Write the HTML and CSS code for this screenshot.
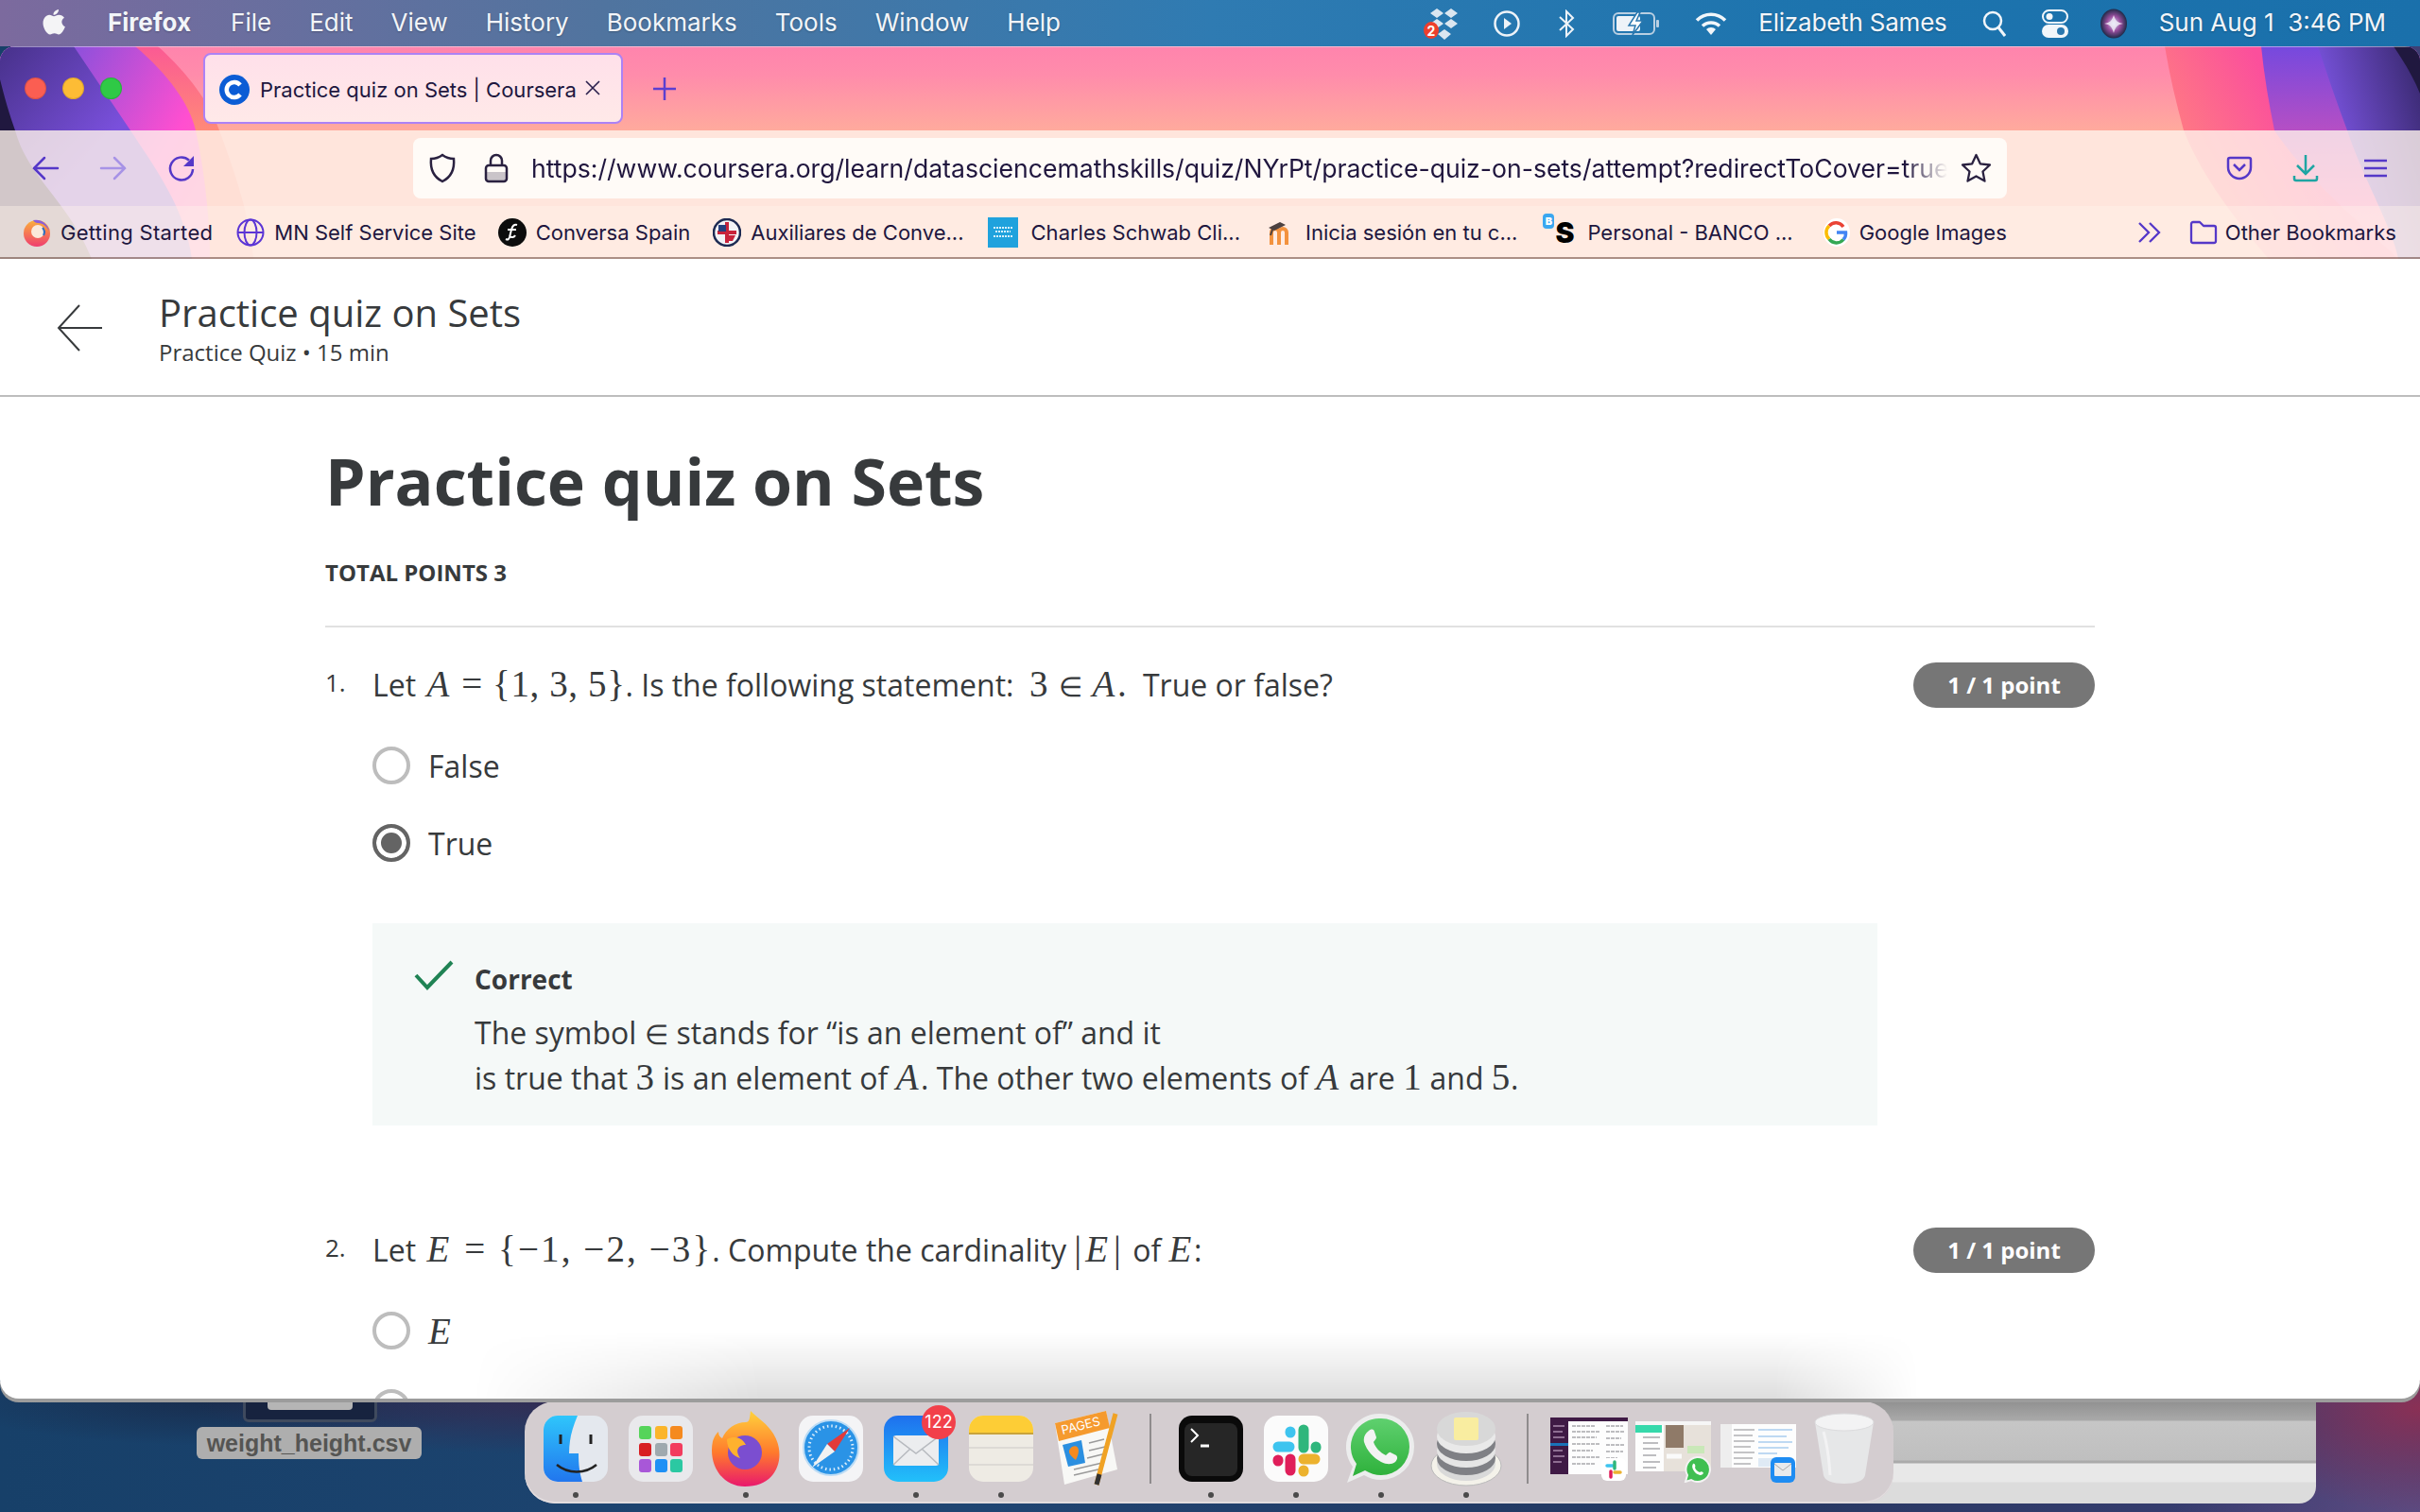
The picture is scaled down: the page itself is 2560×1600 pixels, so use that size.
FILE: index.html
```html
<!DOCTYPE html>
<html lang="en">
<head>
    <meta charset="UTF-8">
    <title>Practice quiz on Sets | Coursera</title>
    <link rel="stylesheet" href="styles.css">
</head>
<body>

<div class="desktop">
    <!-- things lying on the wallpaper, behind the browser -->
    <div class="back-window"></div>
    <div class="file-thumb"><span></span></div>
    <div class="file-label">weight_height.csv</div>

    <header class="menubar">
        <svg class="apple" width="24" height="32" viewBox="0 0 24 32"><path fill="#f4f4f6" d="M17 1c.3 3-2.600 6-5.500 5.800C11.200 4 14 1.300 17 1zM12 8.200c1.400 0 3-1.500 5.500-1.500 2 0 4.200 1 5.500 3-3.900 2.300-3.300 7.800.9 9.500-1.200 3.400-4 8.300-6.800 8.300-1.700 0-2.400-1.200-4.500-1.200s-3 1.200-4.600 1.200C4.500 27.500.5 20.500.5 15.500c0-5.200 3.300-8.700 6.700-8.700 2 0 3.600 1.400 4.800 1.400z"/></svg>
        <nav class="menu-left">
            <span class="menu-app">Firefox</span>
            <span>File</span>
            <span>Edit</span>
            <span>View</span>
            <span>History</span>
            <span>Bookmarks</span>
            <span>Tools</span>
            <span>Window</span>
            <span>Help</span>
        </nav>
        <div class="menu-right">
            <svg class="tray-dropbox" width="40" height="34" viewBox="0 0 40 34"><g fill="#dbe6f0"><path d="M15 1l7 5-7 5-7-5zM30 1l7 5-7 5-7-5zM15 12l7 5-7 5-7-5zM30 12l7 5-7 5-7-5zM23 23l7 5-7 6-7-6z"/></g><ellipse cx="9" cy="24" rx="8" ry="9" fill="#ee3f2c"/><text x="9" y="29.500" class="tray-badge">2</text></svg>
            <svg class="tray-play" width="28" height="30" viewBox="0 0 28 30"><circle cx="14" cy="15" r="12.500" fill="none" stroke="#eef3f8" stroke-width="2.500"/><path d="M11 9l8 6-8 6z" fill="#eef3f8"/></svg>
            <svg class="tray-bt" width="20" height="30" viewBox="0 0 20 30"><path d="M3 8l14 13-7 7V2l7 7L3 22" fill="none" stroke="#eef3f8" stroke-width="2"/></svg>
            <svg class="tray-batt" width="50" height="26" viewBox="0 0 50 26"><rect x="1" y="2" width="43" height="22" rx="5" fill="none" stroke="#b9cfe2" stroke-width="2"/><rect x="4" y="5" width="25" height="16" rx="2" fill="#eef3f8"/><rect x="46" y="9" width="3" height="8" rx="1" fill="#b9cfe2"/><path d="M26 1l-9 14h7l-3 10 11-15h-7l4-9z" fill="#fff" stroke="#2a77ae" stroke-width="1.500"/></svg>
            <svg class="tray-wifi" width="34" height="26" viewBox="0 0 34 26"><g fill="none" stroke="#f2f6fa" stroke-width="3.500"><path d="M2 9.500a21 21 0 0 1 30 0"/><path d="M8 15.500a13 13 0 0 1 18 0"/></g><path d="M17 25l-5-6a7 7 0 0 1 10 0z" fill="#f2f6fa"/></svg>
            <span class="tray-name">Elizabeth Sames</span>
            <svg class="tray-search" width="25" height="28" viewBox="0 0 25 28"><circle cx="11" cy="11" r="9" fill="none" stroke="#f2f6fa" stroke-width="2.500"/><path d="M17 18l7 9" stroke="#f2f6fa" stroke-width="3"/></svg>
            <svg class="tray-control" width="28" height="30" viewBox="0 0 28 30"><rect x="1" y="1" width="26" height="13" rx="6.500" fill="none" stroke="#f2f6fa" stroke-width="2"/><circle cx="8" cy="7.500" r="3.500" fill="#f2f6fa"/><rect x="0" y="16" width="28" height="14" rx="7" fill="#f2f6fa"/><circle cx="20" cy="23" r="4" fill="#2a77ae"/></svg>
            <svg class="tray-siri" width="28" height="32" viewBox="0 0 28 32"><defs><radialGradient id="siri"><stop offset="0" stop-color="#c8e4ee"/><stop offset=".5" stop-color="#9a4f9f"/><stop offset="1" stop-color="#1f2a48"/></radialGradient></defs><ellipse cx="14" cy="16" rx="14" ry="15.500" fill="url(#siri)"/><path d="M4 16c6-1 8-3 10-9 2 6 4 8 10 9-6 1-8 3-10 10-2-7-4-9-10-10z" fill="#f4f0fa" opacity=".8"/></svg>
            <span class="tray-date">Sun Aug 1&nbsp; 3:46 PM</span>
        </div>
    </header>

    <main class="browser">
        <div class="chrome">
            <svg class="chrome-art" width="2560" height="225" viewBox="0 0 2560 225">
                <defs>
                    <linearGradient id="leftBand" x1="0" y1="0" x2="0" y2="1"><stop offset="0" stop-color="#fb5a94"/><stop offset=".4" stop-color="#ff8a78"/></linearGradient>
                    <linearGradient id="leftMagenta" x1="0" y1="0" x2="1" y2=".6"><stop offset=".25" stop-color="#8a50dc"/><stop offset=".8" stop-color="#ff4fd0"/><stop offset="1" stop-color="#ff60c0"/></linearGradient>
                    <linearGradient id="leftPurple" x1="0" y1="0" x2=".5" y2=".5"><stop offset="0" stop-color="#47318a"/><stop offset="1" stop-color="#7a50dc"/></linearGradient>
                    <linearGradient id="rightBand" x1="0" y1=".45" x2="1" y2="0"><stop offset="0" stop-color="#ff8080"/><stop offset=".45" stop-color="#fb4f9c"/></linearGradient>
                    <linearGradient id="rightPurple" x1="0" y1="0" x2="0" y2="1"><stop offset="0" stop-color="#7549de"/><stop offset=".4" stop-color="#b64fc4"/><stop offset=".8" stop-color="#ff60b0"/></linearGradient>
                    <linearGradient id="rightDark" x1="1" y1="0" x2="0" y2=".6"><stop offset=".1" stop-color="#3e2c78"/><stop offset=".9" stop-color="#8058ea"/></linearGradient>
                </defs>
                <path d="M0 0H167C200 30 222 60 232 89C255 150 265 190 268 225H0z" fill="url(#leftBand)"/>
                <path d="M0 0H143C178 30 200 60 207 89C218 140 222 190 222 225H0z" fill="url(#leftMagenta)"/>
                <path d="M0 0H78L138 89C165 130 195 170 203 225H0z" fill="url(#leftPurple)"/>
                <path d="M0 35C5 55 10 72 16 89C30 140 70 160 97 225H0z" fill="#20183f"/>
                <path d="M2290 0C2295 30 2302 60 2310 89C2330 140 2370 190 2400 225H2560V0z" fill="url(#rightBand)"/>
                <path d="M2392 0C2395 30 2400 60 2406 89C2440 140 2500 190 2537 225H2560V0z" fill="url(#rightPurple)"/>
                <path d="M2452 0C2462 30 2472 60 2483 89C2500 140 2530 190 2537 225H2560V0z" fill="url(#rightDark)"/>
                <path d="M2532 0C2542 15 2552 30 2560 50V0z" fill="#20183f"/>
            </svg>

            <div class="tabstrip">
                <div class="traffic">
                    <i class="dot-red"></i><i class="dot-yellow"></i><i class="dot-green"></i>
                </div>
                <div class="tab">
                    <svg width="32" height="32" viewBox="0 0 32 32"><circle cx="16" cy="16" r="16" fill="#0b5cd5"/><path d="M22 11a8 8 0 1 0 0 10" fill="none" stroke="#fff" stroke-width="4.500"/></svg>
                    <span class="tab-title">Practice quiz on Sets | Coursera</span>
                    <svg class="tab-close" width="18" height="18" viewBox="0 0 18 18"><path d="M2 2l14 14M16 2L2 16" stroke="#2a1f4c" stroke-width="1.600"/></svg>
                </div>
                <svg class="tab-new" width="26" height="26" viewBox="0 0 26 26"><path d="M13 1v24M1 13h24" stroke="#5b3fd0" stroke-width="2.500"/></svg>
            </div>

            <div class="navbar">
                <svg width="30" height="28" viewBox="0 0 30 28" class="nav-back"><path d="M28 14H3M14 3L3 14l11 11" fill="none" stroke="#5538c8" stroke-width="2.500" stroke-linecap="round"/></svg>
                <svg width="30" height="28" viewBox="0 0 30 28" class="nav-fwd"><path d="M2 14h25M16 3l11 11-11 11" fill="none" stroke="#a793e6" stroke-width="2.500" stroke-linecap="round"/></svg>
                <svg width="30" height="30" viewBox="0 0 30 30" class="nav-reload"><path d="M27 16a12 12 0 1 1-4-9.500" fill="none" stroke="#5538c8" stroke-width="2.500"/><path d="M28 2v11H17z" fill="#5538c8"/></svg>
                <div class="urlbar">
                    <svg width="30" height="32" viewBox="0 0 30 32"><path d="M15 2c4 3 8 4 12 4 1 11-2 19-12 24C5 25 2 17 3 6c4 0 8-1 12-4z" fill="none" stroke="#2a2140" stroke-width="2.500"/></svg>
                    <svg class="url-lock" width="26" height="32" viewBox="0 0 26 32"><rect x="2" y="13" width="22" height="17" rx="3" fill="none" stroke="#2a2140" stroke-width="2.500"/><path d="M2 20h22v7a3 3 0 0 1-3 3H5a3 3 0 0 1-3-3z" fill="#2a2140" opacity=".25"/><path d="M7 13V8a6 6 0 0 1 12 0v5" fill="none" stroke="#2a2140" stroke-width="2.500"/></svg>
                    <div class="url-text">https://www.coursera.org/learn/datasciencemathskills/quiz/NYrPt/practice-quiz-on-sets/attempt?redirectToCover=true</div>
                    <svg width="33" height="32" viewBox="0 0 32 32"><path d="M16 2l4.300 9.300 10.200 1.200-7.500 7 2 10.100L16 24.500l-9 5.100 2-10.100-7.500-7 10.200-1.200z" fill="none" stroke="#2a2140" stroke-width="2.300" stroke-linejoin="round"/></svg>
                </div>
                <svg class="nav-pocket" width="28" height="26" viewBox="0 0 28 26"><path d="M2 4a2 2 0 0 1 2-2h20a2 2 0 0 1 2 2v8a12 12 0 0 1-24 0z" fill="none" stroke="#5538c8" stroke-width="2.500"/><path d="M8 9l6 6 6-6" fill="none" stroke="#5538c8" stroke-width="2.500"/></svg>
                <svg class="nav-down" width="28" height="30" viewBox="0 0 28 30"><path d="M14 1v20M5 12l9 9 9-9" fill="none" stroke="#1fa5a3" stroke-width="2.500"/><path d="M2 23v3a2 2 0 0 0 2 2h20a2 2 0 0 0 2-2v-3" fill="none" stroke="#1fa5a3" stroke-width="2.500"/></svg>
                <svg class="nav-menu" width="26" height="20" viewBox="0 0 26 20"><path d="M1 2h24M1 10h24M1 18h24" stroke="#5538c8" stroke-width="2.500"/></svg>
            </div>

            <div class="bookmarks">
                <div class="bm">
                    <svg width="30" height="30" viewBox="0 0 30 30"><defs><linearGradient id="ffMark" x1="0" y1="0" x2="0" y2="1"><stop offset="0" stop-color="#fbb03b"/><stop offset="1" stop-color="#ef3d6f"/></linearGradient></defs><circle cx="15" cy="16" r="14" fill="url(#ffMark)"/><circle cx="16" cy="14" r="7" fill="#fbe9da"/><path d="M11 2a14 14 0 0 1 17 12c-2-5-6-9-12-9-2 0-4-1-5-3z" fill="#8b5ed8"/><path d="M21 10a7 7 0 0 1 1 8" stroke="#2c6fc0" stroke-width="2" fill="none"/></svg>
                    <span class="bm-wide">Getting Started</span>
                </div>
                <div class="bm">
                    <svg width="30" height="30" viewBox="0 0 30 30"><g fill="none" stroke="#5b35d5" stroke-width="2"><circle cx="15" cy="15" r="13.500"/><ellipse cx="15" cy="15" rx="6.500" ry="13.500"/><path d="M2 15h26"/></g></svg>
                    <span>MN Self Service Site</span>
                </div>
                <div class="bm">
                    <svg width="30" height="30" viewBox="0 0 30 30"><circle cx="15" cy="15" r="15" fill="#0c0c0c"/><path d="M20 7c-3-1-5 1-6 5l-2 8c-1 3-2 3-4 2M10 12h9M12 19c2 2 5 1 6-1" fill="none" stroke="#fff" stroke-width="2"/></svg>
                    <span>Conversa Spain</span>
                </div>
                <div class="bm">
                    <svg width="30" height="30" viewBox="0 0 30 30"><circle cx="15" cy="15" r="14" fill="#f3f3f6" stroke="#1d2a52" stroke-width="2.500"/><path d="M15 4v22M5 15h20" stroke="#c8233b" stroke-width="4"/><path d="M6 7h8v7H6z" fill="#25407f"/><path d="M17 18h7l-3 6h-4z" fill="#c8233b"/></svg>
                    <span>Auxiliares de Conve...</span>
                </div>
                <div class="bm bm-schwab">
                    <svg width="32" height="32" viewBox="0 0 32 32"><rect width="32" height="32" fill="#1fa2dd"/><path d="M6 11h20M8 15h16M6 20h20" stroke="#d8f2fb" stroke-width="2" stroke-dasharray="2 1"/></svg>
                    <span>Charles Schwab Cli...</span>
                </div>
                <div class="bm">
                    <svg width="32" height="30" viewBox="0 0 32 30"><path d="M6 28V15a4 4 0 0 1 8 0v13M14 15a4 4 0 0 1 8 0v13" fill="none" stroke="#f3923e" stroke-width="4"/><path d="M3 10l12-6 6 3-12 6z" fill="#4c4140"/><path d="M8 9l-3 9" stroke="#4c4140" stroke-width="2"/></svg>
                    <span>Inicia sesión en tu c...</span>
                </div>
                <div class="bm">
                    <span class="banco-icon"><i>B</i>S</span>
                    <span>Personal - BANCO ...</span>
                </div>
                <div class="bm">
                    <svg width="28" height="30" viewBox="0 0 28 30"><ellipse cx="14" cy="15" rx="14" ry="15" fill="#fff"/><g fill="none" stroke-width="3.500"><path d="M21 9a9.500 9.500 0 0 0-15-1" stroke="#ea4335"/><path d="M6 8a9.500 9.500 0 0 0 0 14" stroke="#fbbc05"/><path d="M6 22a9.500 9.500 0 0 0 15 .5" stroke="#34a853"/><path d="M21 22.500a9.500 9.500 0 0 0 2.500-7.500H14" stroke="#4285f4"/></g></svg>
                    <span>Google Images</span>
                </div>
                <svg class="bm-more" width="26" height="24" viewBox="0 0 26 24"><path d="M2 2l10 10L2 22M13 2l10 10-10 10" fill="none" stroke="#5538c8" stroke-width="2.300"/></svg>
                <div class="bm bm-other">
                    <svg width="30" height="26" viewBox="0 0 30 26"><path d="M2 4a2 2 0 0 1 2-2h7l4 4h11a2 2 0 0 1 2 2v14a2 2 0 0 1-2 2H4a2 2 0 0 1-2-2z" fill="none" stroke="#5538c8" stroke-width="2.300" stroke-linejoin="round"/></svg>
                    <span>Other Bookmarks</span>
                </div>
            </div>
        </div>

        <div class="page">
            <div class="page-head">
                <svg class="head-back" width="50" height="52" viewBox="0 0 50 52"><path d="M48 26H2M24 2L2 26l22 24" fill="none" stroke="#373a3c" stroke-width="2"/></svg>
                <div class="head-text">
                    <div class="head-title">Practice quiz on Sets</div>
                    <div class="head-sub">Practice Quiz • 15 min</div>
                </div>
            </div>

            <div class="quiz">
                <h1>Practice quiz on Sets</h1>
                <div class="total">TOTAL POINTS 3</div>

                <section class="question q-one">
                    <div class="q-row">
                        <span class="q-num">1.</span>
                        <div class="q-text">Let <span class="math"><i>A</i> = {1, 3, 5}</span>. Is the following statement: &nbsp;<span class="math">3 <span class="elem">∈</span> <i>A</i>.</span>&nbsp; True or false?</div>
                        <span class="pill">1 / 1 point</span>
                    </div>
                    <div class="option option-first"><span class="radio"></span>False</div>
                    <div class="option"><span class="radio radio-on"></span>True</div>
                    <div class="feedback">
                        <svg width="42" height="32" viewBox="0 0 42 32"><path d="M2 16l12 13L40 2" fill="none" stroke="#1f8354" stroke-width="4"/></svg>
                        <div>
                            <div class="feedback-title">Correct</div>
                            <div class="feedback-text">The symbol <span class="math elem">∈</span> stands for “is an element of” and it</div>
                            <div class="feedback-text">is true that <span class="math">3</span> is an element of <span class="math"><i>A</i></span>. The other two elements of <span class="math"><i>A</i></span> are <span class="math">1</span> and <span class="math">5</span>.</div>
                        </div>
                    </div>
                </section>

                <section class="question q-two">
                    <div class="q-row">
                        <span class="q-num">2.</span>
                        <div class="q-text">Let <span class="math math-set"><i>E</i> = {−1, −2, −3}</span>. Compute the cardinality <span class="math math-abs">|<i>E</i>|</span> of <span class="math"><i>E</i></span>:</div>
                        <span class="pill">1 / 1 point</span>
                    </div>
                    <div class="option option-first"><span class="radio"></span><span class="math"><i>E</i></span></div>
                    <div class="option"><span class="radio"></span></div>
                </section>
            </div>
            <div class="page-fade"></div>
        </div>
    </main>

    <footer class="dock-row">
        <div class="dock">
            <div class="dock-app run">
                <svg width="68" height="70" viewBox="0 0 68 70"><defs><linearGradient id="fin" x1="0" y1="0" x2="0" y2="1"><stop offset="0" stop-color="#2fc6fb"/><stop offset="1" stop-color="#2176ee"/></linearGradient></defs><rect width="68" height="70" rx="15" fill="#e4e8ee"/><path d="M15 0h21c-6 14-9 26-9 40h10c0 12 1 20 4 30H15A15 15 0 0 1 0 55V15A15 15 0 0 1 15 0z" fill="url(#fin)"/><path d="M18 20v10M50 20v10" stroke="#222" stroke-width="3"/><path d="M14 52c12 10 30 10 42 0" fill="none" stroke="#222" stroke-width="2.500"/></svg>
            </div>
            <div class="dock-app">
                <svg width="68" height="70" viewBox="0 0 68 70"><rect width="68" height="70" rx="15" fill="#e9e9ec"/><g><rect x="11" y="11" width="13" height="14" rx="3" fill="#55d45a"/><rect x="28" y="11" width="13" height="14" rx="3" fill="#fbb52a"/><rect x="44" y="11" width="13" height="14" rx="3" fill="#f58a1f"/><rect x="11" y="29" width="13" height="14" rx="3" fill="#d81e22"/><rect x="28" y="29" width="13" height="14" rx="3" fill="#9fa9ae"/><rect x="44" y="29" width="13" height="14" rx="3" fill="#f23c5e"/><rect x="11" y="46" width="13" height="14" rx="3" fill="#a857d8"/><rect x="28" y="46" width="13" height="14" rx="3" fill="#1e90f5"/><rect x="44" y="46" width="13" height="14" rx="3" fill="#2bc8a2"/></g></svg>
            </div>
            <div class="dock-app run">
                <svg width="76" height="80" viewBox="0 0 76 80"><defs><linearGradient id="fox" x1="0" y1="0" x2="0" y2="1"><stop offset="0" stop-color="#ffd23c"/><stop offset=".55" stop-color="#ff7a2c"/><stop offset="1" stop-color="#e9186d"/></linearGradient></defs><path d="M38 12c4 0 4-4 5-12 8 8 18 14 24 24 14 22 6 56-30 56C12 80-2 56 3 32c2-6 4-8 6-10 0 4 2 6 4 7 4-10 14-17 25-17z" fill="url(#fox)"/><circle cx="37" cy="44" r="18" fill="#7b4ed0"/><path d="M18 30c8-4 16-2 20 6-8 0-12 6-6 14-8-2-14-10-14-20z" fill="#ffb12e"/></svg>
            </div>
            <div class="dock-app">
                <svg width="68" height="70" viewBox="0 0 68 70"><rect width="68" height="70" rx="15" fill="#f4f4f6"/><circle cx="34" cy="34" r="29" fill="#2a93e6" stroke="#bcdcf5" stroke-width="2"/><circle cx="34" cy="34" r="23" fill="none" stroke="#dceefb" stroke-width="3" stroke-dasharray="1.500 3"/><path d="M54 13L30 30l8 8z" fill="#e23a3a"/><path d="M14 55L38 38l-8-8z" fill="#f2f2f2"/></svg>
            </div>
            <div class="dock-app run">
                <svg width="68" height="70" viewBox="0 0 68 70"><defs><linearGradient id="mailBg" x1="0" y1="0" x2="0" y2="1"><stop offset="0" stop-color="#1e70ee"/><stop offset="1" stop-color="#22c0fa"/></linearGradient></defs><rect width="68" height="70" rx="15" fill="url(#mailBg)"/><rect x="10" y="21" width="48" height="32" rx="3" fill="#ecedef"/><path d="M10 22l24 18 24-18M10 52l18-17M58 52L40 35" fill="none" stroke="#b7babf" stroke-width="1.500"/></svg>
                <span class="dock-badge">122</span>
            </div>
            <div class="dock-app run">
                <svg width="68" height="70" viewBox="0 0 68 70"><defs><clipPath id="notesClip"><rect width="68" height="70" rx="15"/></clipPath></defs><g clip-path="url(#notesClip)"><rect width="68" height="70" fill="#eeebe4"/><rect width="68" height="18" fill="#fdcd36"/><rect y="18" width="68" height="2" fill="#c9a33a"/><path d="M0 34h68M0 52h68" stroke="#d8d5cf" stroke-width="1.500"/></g></svg>
            </div>
            <div class="dock-app">
                <svg width="70" height="80" viewBox="0 0 70 80"><path d="M2 13L56 0l12 62-56 16z" fill="#f8f8f6"/><path d="M2 13L56 0l4 18L6 32z" fill="#f59a2e"/><text x="10" y="25" class="pages-word" transform="rotate(-14 10 25)">PAGES</text><path d="M10 36l20-5 4 24-18 4z" fill="#2b8fe0"/><path d="M20 38c6-3 10 2 4 14-8-6-9-10-4-14z" fill="#f58a1f"/><path d="M38 34l16-4M38 42l17-4M36 50l20-5M22 62l30-7M22 68l30-7" stroke="#9a9a9a" stroke-width="1.500"/><path d="M66 3L46 78" stroke="#f0a224" stroke-width="5"/><path d="M49 67l-3 11" stroke="#333" stroke-width="5"/></svg>
            </div>
            <span class="dock-sep sep-one"></span>
            <div class="dock-app run">
                <svg width="68" height="70" viewBox="0 0 68 70"><rect width="68" height="70" rx="14" fill="#0a0a0a"/><rect x="6" y="8" width="56" height="56" rx="8" fill="#262626"/><path d="M13 14l7 7-7 7" fill="none" stroke="#fff" stroke-width="2"/><path d="M23 32h9" stroke="#fff" stroke-width="3"/></svg>
            </div>
            <div class="dock-app run">
                <svg width="68" height="70" viewBox="0 0 68 70"><rect width="68" height="70" rx="15" fill="#fbfbfb"/><g stroke-linecap="round" stroke-width="11" fill="none"><path d="M28 17v1" stroke="#3ec4ef"/><path d="M15 33h12" stroke="#3ec4ef"/><path d="M42 15v19" stroke="#2fb67c"/><path d="M55 33v1" stroke="#2fb67c"/><path d="M15 47v1" stroke="#e01e5a"/><path d="M28 46v12" stroke="#e01e5a"/><path d="M42 46h12" stroke="#ecb22e"/><path d="M42 58v1" stroke="#ecb22e"/></g></svg>
            </div>
            <div class="dock-app run">
                <svg width="74" height="78" viewBox="0 0 74 78"><path d="M37 2a35 35 0 0 1 0 70c-7 0-13-2-18-5L1 75l6-17A35 35 0 0 1 37 2z" fill="#eceded"/><defs><linearGradient id="wa" x1="0" y1="0" x2="0" y2="1"><stop offset="0" stop-color="#5fd06f"/><stop offset="1" stop-color="#2eb13b"/></linearGradient></defs><path d="M37 7a30 30 0 0 1 0 60c-6 0-12-2-17-5L7 68l4-13A30 30 0 0 1 37 7z" fill="url(#wa)"/><path d="M24 20c3-2 5-2 6 1l2 6c0 2-2 3-3 5 2 6 7 11 13 14 2-1 3-4 5-3l6 3c2 2 1 5-1 7-4 3-9 3-15 0-9-5-15-12-18-21-1-5 1-9 5-12z" fill="#f3f3f3"/></svg>
            </div>
            <div class="dock-app run">
                <svg width="76" height="80" viewBox="0 0 76 80"><ellipse cx="38" cy="58" rx="37" ry="21" fill="#f4f2ea" stroke="#bbb"/><g><ellipse cx="38" cy="56" rx="31" ry="18" fill="#d9d9d9"/><ellipse cx="38" cy="50" rx="31" ry="18" fill="#7f8085"/><ellipse cx="38" cy="42" rx="31" ry="18" fill="#e5e5e5"/><ellipse cx="38" cy="35" rx="31" ry="18" fill="#7f8085"/><ellipse cx="38" cy="27" rx="31" ry="18" fill="#e9e9e9"/><ellipse cx="38" cy="19" rx="31" ry="18" fill="#d8d8d8"/></g><rect x="25" y="7" width="26" height="24" rx="2" fill="#f9eda0"/></svg>
            </div>
            <span class="dock-sep sep-two"></span>
            <svg class="thumb" width="82" height="72" viewBox="0 0 82 72">
                <rect y="3" width="82" height="60" fill="#fdfdfd"/>
                <rect y="3" width="82" height="4" fill="#3f1a45"/>
                <rect y="3" width="19" height="60" fill="#3f1a45"/>
                <rect y="30" width="19" height="3" fill="#1a73b8"/>
                <path d="M3 12h12M3 18h10M3 24h12M3 38h10M3 44h12M3 50h9" stroke="#a98bac" stroke-width="1.500"/>
                <path d="M23 12h24M23 18h30M23 24h26M23 31h30M23 38h22M23 45h30M23 52h24M59 12h18M59 18h20M59 25h16M59 32h20M59 39h18M59 46h12" stroke="#bdbdc0" stroke-width="2" stroke-dasharray="4 1"/>
                <rect x="54" y="46" width="26" height="24" rx="6" fill="#fff"/>
                <g stroke-linecap="round" stroke-width="3.500" fill="none"><path d="M60 54h6" stroke="#3ec4ef"/><path d="M68 50v7" stroke="#2fb67c"/><path d="M68 61h6" stroke="#ecb22e"/><path d="M64 60v6" stroke="#e01e5a"/></g>
            </svg>
            <svg class="thumb" width="82" height="72" viewBox="0 0 82 72">
                <rect y="7" width="80" height="53" fill="#e7e1da"/>
                <rect y="7" width="30" height="53" fill="#fdfdfd"/>
                <rect y="7" width="80" height="4" fill="#f6f6f6"/>
                <rect y="11" width="28" height="8" fill="#36d9ab"/>
                <path d="M8 24h18M8 30h16M8 36h18M8 43h14M8 50h18M8 56h14" stroke="#bdbdc0" stroke-width="2"/>
                <rect x="32" y="11" width="19" height="24" fill="#8f7a68"/>
                <rect x="55" y="33" width="18" height="8" fill="#c9e8b8"/>
                <path d="M33 44h16" stroke="#fafafa" stroke-width="5"/>
                <path d="M65 45a13 13 0 1 1-6 24l-6 2 2-7a13 13 0 0 1 10-19z" fill="#3fbf51" stroke="#f3f3f3" stroke-width="2"/>
                <path d="M61 52c2-1 3 3 2 4 1 3 3 4 5 5 2-2 4 0 4 1-2 3-5 2-8 0-3-3-5-7-3-10z" fill="#fff"/>
            </svg>
            <svg class="thumb" width="82" height="72" viewBox="0 0 82 72">
                <rect y="10" width="80" height="46" fill="#fdfdfd"/>
                <rect y="10" width="12" height="46" fill="#eeeeee"/>
                <path d="M14 16h22M14 22h20M14 28h22M14 34h18M14 40h22M14 46h20M14 52h18" stroke="#c4c4c6" stroke-width="2"/>
                <path d="M40 16h36M40 23h30M40 29h36M40 35h32M40 41h20" stroke="#a9cdee" stroke-width="1.500"/>
                <rect x="40" y="46" width="16" height="9" fill="#dfeaf5"/>
                <rect x="53" y="45" width="26" height="27" rx="6" fill="#1e8cf2"/>
                <rect x="57" y="51" width="18" height="14" rx="1" fill="#e9eaec"/>
                <path d="M57 52l9 7 9-7" fill="none" stroke="#aaa"/>
            </svg>
            <svg class="dock-trash" width="64" height="76" viewBox="0 0 64 76"><path d="M1 10l9 56c1 6 10 9 22 9s21-3 22-9l9-56z" fill="#e6e7e8"/><ellipse cx="32" cy="10" rx="31" ry="9" fill="#f3f3f4" stroke="#dcdcde"/><path d="M10 20c4 14 6 30 7 46" stroke="#f2f2f3" stroke-width="3" fill="none"/></svg>
        </div>
    </footer>
</div>

</body>
</html>
```

FILE: styles.css
```css
html, body {
    margin: 0;
    padding: 0;
}
body {
    width: 2560px;
    height: 1600px;
    overflow: hidden;
    font-family: "Open Sans", sans-serif;
}
.desktop {
    position: relative;
    width: 2560px;
    height: 1600px;
    overflow: hidden;
    display: flex;
    flex-direction: column;
    background:
        radial-gradient(220px 110px at 2560px 1490px, #8a3055, transparent),
        radial-gradient(260px 100px at 2560px 1600px, #5c4a80, transparent),
        radial-gradient(420px 60px at 620px 1480px, #352a50, transparent),
        radial-gradient(300px 50px at 240px 1480px, #192c4c, transparent),
        linear-gradient(90deg, #174069 0%, #1f4572 40%, #243760 70%, #3e3f75 100%);
}

/* menu bar */
.menubar {
    height: 49px;
    flex: none;
    display: flex;
    align-items: center;
    padding-left: 45px;
    font-family: Inter, sans-serif;
    font-size: 26px;
    color: #f2f5f9;
    background: linear-gradient(90deg, #7c6a9e 0%, #50749f 25%, #2f7bb2 50%, #1d74ae 75%, #1a70ab 100%);
    text-shadow: 0 1px 2px rgba(0, 0, 0, .25);
}
.apple {
    margin-right: 45px;
}
.menu-left {
    display: flex;
    gap: 40px;
    margin-top: -2px;
}
.menu-app {
    font-weight: 700;
    margin-right: 2px;
}
.menu-right {
    margin-left: auto;
    display: flex;
    align-items: center;
    padding-right: 36px;
}
.tray-play { margin-left: 35px; }
.tray-bt { margin-left: 39px; }
.tray-batt { margin-left: 39px; }
.tray-wifi { margin-left: 37px; }
.tray-name {
    margin-left: 33px;
    margin-top: -2px;
    letter-spacing: -.2px;
}
.tray-search { margin-left: 37px; }
.tray-control { margin-left: 38px; }
.tray-siri { margin-left: 34px; }
.tray-date {
    margin-left: 34px;
    margin-top: -2px;
}
.tray-badge {
    font-size: 14px;
    font-weight: 700;
    fill: #fff;
    text-anchor: middle;
    text-shadow: none;
}

/* browser window */
.browser {
    position: relative;
    z-index: 2;
    height: 1431px;
    flex: none;
    display: flex;
    flex-direction: column;
    overflow: hidden;
    border-radius: 16px 16px 20px 20px;
    background: #fff;
}
.desktop::after {
    /* grey lip under the window */
    content: "";
    position: absolute;
    z-index: 1;
    left: 0;
    top: 1462px;
    width: 2560px;
    height: 22px;
    border-radius: 0 0 20px 20px;
    background: #9c9c9c;
}
.chrome {
    position: relative;
    height: 225px;
    flex: none;
    display: flex;
    flex-direction: column;
    background: linear-gradient(180deg, #ff84ad 0, #ff8cab 30px, #ffaa9d 89px);
    font-family: Inter, sans-serif;
}
.chrome-art {
    position: absolute;
    top: 0;
    left: 0;
}
.chrome::before {
    content: "";
    position: absolute;
    z-index: 1;
    top: 0;
    left: 0;
    right: 0;
    height: 1px;
    background: rgba(255, 255, 255, .45);
}
.tabstrip {
    position: relative;
    height: 89px;
    flex: none;
    display: flex;
    align-items: center;
}
.traffic {
    display: flex;
    gap: 17px;
    margin-left: 26px;
}
.traffic i {
    display: block;
    width: 23px;
    height: 23px;
    box-sizing: border-box;
    border-radius: 50%;
    border: 1px solid rgba(0, 0, 0, .12);
}
.dot-red { background: #fb5e52; }
.dot-yellow { background: #fdbc35; }
.dot-green { background: #2fc946; }
.tab {
    width: 444px;
    height: 75px;
    box-sizing: border-box;
    margin-left: 86px;
    padding: 2px 0 0 15px;
    display: flex;
    align-items: center;
    border: 2px solid #ac82f5;
    border-radius: 8px;
    background: linear-gradient(180deg, #ffe0ea, #ffe9e8);
    color: #20163e;
    font-size: 22px;
}
.tab-title {
    margin-left: 11px;
    white-space: nowrap;
}
.tab-close {
    margin-left: auto;
    margin-right: 21px;
    margin-top: -4px;
}
.tab-new {
    margin-left: 31px;
}
.navbar {
    position: relative;
    height: 80px;
    flex: none;
    display: flex;
    align-items: center;
    padding-left: 33px;
    background: rgba(255, 244, 236, .8);
}
.nav-fwd { margin-left: 42px; }
.nav-reload { margin-left: 42px; }
.urlbar {
    width: 1686px;
    height: 64px;
    box-sizing: border-box;
    margin-left: 230px;
    padding: 0 16px;
    display: flex;
    align-items: center;
    border-radius: 8px;
    background: #fffbf7;
    color: #20163e;
}
.url-lock {
    margin-left: 29px;
}
.url-text {
    flex: 1;
    min-width: 0;
    margin: 0 14px 0 24px;
    font-size: 26.6px;
    white-space: nowrap;
    overflow: hidden;
    -webkit-mask-image: linear-gradient(90deg, #000 97%, transparent);
    mask-image: linear-gradient(90deg, #000 97%, transparent);
}
.nav-pocket { margin-left: 232px; }
.nav-down { margin-left: 42px; }
.nav-menu { margin-left: 47px; }
.bookmarks {
    position: relative;
    flex: 1;
    box-sizing: border-box;
    display: flex;
    align-items: center;
    padding: 2px 0 0 24px;
    background: rgba(255, 244, 236, .88);
    border-bottom: 2px solid rgba(70, 30, 20, .45);
    color: #20163e;
    font-size: 22px;
}
.bm {
    display: flex;
    align-items: center;
    gap: 10px;
    white-space: nowrap;
}
.bm-wide {
    letter-spacing: .3px;
}
/* the bookmark items aren't evenly spaced in the toolbar */
.bm:nth-child(2) { margin-left: 25px; }
.bm:nth-child(3) { margin-left: 23px; }
.bm:nth-child(4) { margin-left: 24px; }
.bm:nth-child(5) { margin-left: 25px; }
.bm:nth-child(6) { margin-left: 27px; }
.bm:nth-child(7) { margin-left: 27px; }
.bm:nth-child(8) { margin-left: 32px; }
.bm-schwab { gap: 14px; }
.banco-icon {
    position: relative;
    width: 33px;
    margin-right: 4px;
    font-size: 30px;
    font-weight: 900;
    color: #000;
    text-align: right;
}
.banco-icon i {
    position: absolute;
    top: -2px;
    left: 0;
    width: 12px;
    height: 16px;
    border-radius: 4px;
    background: #3aa7f0;
    color: #fff;
    font-size: 11px;
    font-style: normal;
    line-height: 16px;
    text-align: center;
}
.bm-more {
    margin-left: 138px;
}
.bm-other {
    margin-left: 29px;
    gap: 8px;
}

/* coursera page */
.page {
    position: relative;
    flex: 1;
    min-height: 0;
    overflow: hidden;
    color: #373a3c;
}
.page-head {
    height: 146px;
    box-sizing: border-box;
    display: flex;
    align-items: center;
    padding-left: 60px;
    gap: 58px;
    border-bottom: 2px solid #bdbdbd;
}
.head-back {
    margin-top: 2px;
}
.head-text {
    margin-top: 3px;
}
.head-title {
    font-size: 40px;
    line-height: 48px;
}
.head-sub {
    margin-top: 2px;
    font-size: 24px;
    line-height: 32px;
}
.quiz {
    width: 1872px;
    margin-left: 344px;
}
h1 {
    margin: 0;
    padding-top: 43px;
    font-size: 68px;
    line-height: 92px;
    font-weight: 700;
}
.total {
    margin-top: 35px;
    padding-bottom: 40px;
    border-bottom: 2px solid #e1e1e1;
    font-size: 24px;
    line-height: 32px;
    font-weight: 700;
}
.q-row {
    display: flex;
    align-items: flex-start;
}
.q-one {
    padding-top: 36px;
}
.q-two {
    padding-top: 107px;
}
.q-num {
    width: 50px;
    font-size: 26px;
    line-height: 44px;
}
.q-text {
    flex: 1;
    font-size: 32px;
    line-height: 50px;
}
.q-text .math:first-child {
    margin-left: 3px;
}
.math {
    font-family: "Liberation Serif", serif;
    font-size: 39px;
    line-height: 1;
    letter-spacing: .6px;
}
.math i {
    padding-right: 2px;
}
.math-set {
    letter-spacing: 2.1px;
}
.math-abs {
    letter-spacing: 4px;
}
.elem {
    font-family: "DejaVu Sans", sans-serif;
    font-size: 29px;
    font-weight: 200;
}
.pill {
    width: 192px;
    height: 48px;
    margin-top: 1px;
    border-radius: 24px;
    background: #767676;
    color: #fff;
    font-size: 24px;
    font-weight: 700;
    line-height: 48px;
    text-align: center;
}
.option {
    height: 82px;
    display: flex;
    align-items: center;
    gap: 19px;
    margin-left: 50px;
    font-size: 32px;
}
.option-first {
    margin-top: 19px;
}
.radio {
    width: 40px;
    height: 40px;
    box-sizing: border-box;
    border: 4px solid #bdbdbd;
    border-radius: 50%;
    flex: none;
}
.radio-on {
    border-color: #646464;
    background: #646464;
    box-shadow: inset 0 0 0 5px #fff;
}
.feedback {
    width: 1592px;
    height: 214px;
    box-sizing: border-box;
    margin: 44px 0 0 50px;
    padding: 39px 0 0 44px;
    display: flex;
    gap: 22px;
    background: #f5f9f8;
}
.feedback-title {
    font-size: 28px;
    font-weight: 700;
    line-height: 40px;
    margin-bottom: 13px;
}
.feedback-text {
    font-size: 32px;
    line-height: 48px;
}
.page-fade {
    position: absolute;
    left: 500px;
    right: 530px;
    bottom: 0;
    height: 70px;
    background: linear-gradient(180deg, transparent, rgba(0, 0, 0, .13));
    -webkit-mask-image: linear-gradient(90deg, transparent, #000 20%, #000 90%, transparent);
    mask-image: linear-gradient(90deg, transparent, #000 20%, #000 90%, transparent);
}

/* behind the browser */
.back-window {
    position: absolute;
    left: 700px;
    top: 1480px;
    width: 1750px;
    height: 111px;
    border-radius: 0 0 18px 0;
    background: linear-gradient(180deg, #8d8d8d 0, #a9a9a9 23px, #c6c6c6 24px, #bfbfbf 65px, #aaa 66px, #aaa 68px, #e8e8e8 69px, #e8e8e8 88px, #dcdcdc 89px, #dcdcdc 100%);
}
.file-thumb {
    position: absolute;
    left: 257px;
    top: 1470px;
    width: 142px;
    height: 35px;
    box-sizing: border-box;
    border: 3px solid #3f4a5e;
    border-radius: 6px;
    background: #17233f;
}
.file-thumb span {
    display: block;
    width: 90px;
    height: 19px;
    margin: 0 auto;
    border-radius: 0 0 4px 4px;
    background: #b5b5b5;
}
.file-label {
    position: absolute;
    left: 208px;
    top: 1510px;
    width: 238px;
    height: 34px;
    border-radius: 6px;
    background: #aeaeae;
    color: #555553;
    font-family: "Liberation Sans", sans-serif;
    font-size: 25px;
    font-weight: 700;
    line-height: 34px;
    text-align: center;
}

/* dock */
.dock-row {
    position: relative;
    z-index: 1;
    flex: 1;
    display: flex;
    align-items: flex-start;
    padding-left: 555px;
    padding-top: 3px;
}
.dock {
    width: 1448px;
    height: 108px;
    box-sizing: border-box;
    display: flex;
    align-items: center;
    padding: 0 0 9px 20px;
    border-radius: 32px;
    background: #d4cdd0;
    box-shadow: inset 0 -2px 0 #e2dcde;
}
.dock-app {
    position: relative;
    width: 68px;
    height: 80px;
    margin-right: 22px;
    display: flex;
    justify-content: center;
    align-items: center;
    flex: none;
}
.dock-app svg {
    flex: none;
}
.dock-app.run::after {
    content: "";
    position: absolute;
    left: 31px;
    bottom: -12px;
    width: 6px;
    height: 6px;
    border-radius: 50%;
    background: #4a4a4a;
}
.dock-badge {
    position: absolute;
    top: -6px;
    right: -8px;
    width: 36px;
    height: 36px;
    border-radius: 50%;
    background: #f2404a;
    color: #fff;
    font-family: Inter, sans-serif;
    font-size: 18px;
    line-height: 36px;
    text-align: center;
}
.pages-word {
    font-family: Inter, sans-serif;
    font-size: 13px;
    fill: #fff;
}
.dock-sep {
    width: 2px;
    height: 74px;
    flex: none;
    background: #8f8c8d;
}
.sep-one { margin: 0 29px 0 11px; }
.sep-two { margin: 0 23px 0 8px; }
.thumb {
    flex: none;
    margin-right: 8px;
}
.dock-trash {
    flex: none;
    margin-left: 9px;
}
```
